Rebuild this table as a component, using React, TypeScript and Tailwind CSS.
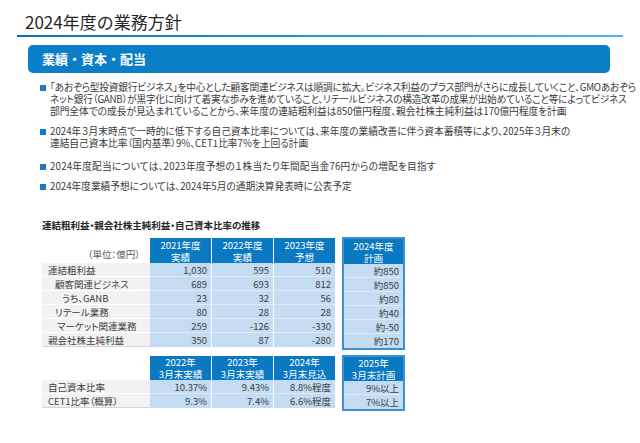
import React from 'react';

const FONT = "font-['Noto_Sans_CJK_JP','Noto_Sans',sans-serif]";

interface Col {
  head: [string, string];
  values: string[];
}

const labels1 = [
  { text: '連結粗利益', indent: 'pl-[6px]' },
  { text: '顧客関連ビジネス', indent: 'pl-[13px]' },
  { text: 'うち、GANB', indent: 'pl-[20px]' },
  { text: 'リテール業務', indent: 'pl-[13px]' },
  { text: 'マーケット関連業務', indent: 'pl-[15px]' },
  { text: '親会社株主純利益', indent: 'pl-[6px]' },
];

const cols1: Col[] = [
  { head: ['2021年度', '実績'], values: ['1,030', '689', '23', '80', '259', '350'] },
  { head: ['2022年度', '実績'], values: ['595', '693', '32', '28', '-126', '87'] },
  { head: ['2023年度', '予想'], values: ['510', '812', '56', '28', '-330', '-280'] },
];
const plan1: Col = { head: ['2024年度', '計画'], values: ['約850', '約850', '約80', '約40', '約-50', '約170'] };

const labels2 = [
  { text: '自己資本比率', indent: 'pl-[6px]' },
  { text: 'CET1比率（概算）', indent: 'pl-[6px]' },
];
const cols2: Col[] = [
  { head: ['2022年', '3月末実績'], values: ['10.37%', '9.3%'] },
  { head: ['2023年', '3月末実績'], values: ['9.43%', '7.4%'] },
  { head: ['2024年', '3月末見込'], values: ['8.8%程度', '6.6%程度'] },
];
const plan2: Col = { head: ['2025年', '3月末計画'], values: ['9%以上', '7%以上'] };

// a line is either plain text or [text, extra classes]
type Line = string | [string, string];

const Bullet: React.FC<{ lines: Line[]; className?: string }> = ({ lines, className }) => (
  <div className={`flex ${className ?? ''}`}>
    <div className="w-[10px] shrink-0 pt-[4px]">
      <div className="w-[6px] h-[6px] bg-[#1f78c4]" />
    </div>
    <div className="whitespace-nowrap">
      {lines.map((l, i) =>
        typeof l === 'string' ? (
          <div key={i}>{l}</div>
        ) : (
          <div key={i} className={l[1]}>
            {l[0]}
          </div>
        )
      )}
    </div>
  </div>
);

const DataCol: React.FC<{ col: Col; headH: string; plan?: boolean }> = ({ col, headH, plan }) => (
  <div
    className={
      plan
        ? 'w-[63px] flex flex-col border-2 border-[#3c90d6] -mt-[1px]'
        : 'w-[61px] mr-[1px] flex flex-col'
    }
  >
    <div
      className={`${headH} bg-[#0b78c2] text-white flex flex-col items-center justify-center leading-[12px]`}
    >
      <div>{col.head[0]}</div>
      <div>{col.head[1]}</div>
    </div>
    {col.values.map((v, i) => (
      <div
        key={i}
        className={`h-[14px] bg-[#c3dcf1] text-right pr-[4px] leading-[14px] ${
          i < col.values.length - 1 ? 'border-b border-[#dce9f6]' : ''
        }`}
      >
        {v}
      </div>
    ))}
  </div>
);

const Table: React.FC<{
  labels: { text: string; indent: string }[];
  cols: Col[];
  plan: Col;
  headH: string;
  unit?: boolean;
}> = ({ labels, cols, plan, headH, unit }) => (
  <div className="flex text-[9.5px] text-[#404040]">
    <div className="w-[108px] flex flex-col">
      <div className={`${headH} flex items-end justify-end pr-[10px] pb-[2px] text-[#595959]`}>
        {unit ? '（単位：億円）' : ''}
      </div>
      {labels.map((l, i) => (
        <div
          key={i}
          className={`h-[14px] leading-[14px] bg-[#f2f2f2] ${l.indent} border-b ${
            i < labels.length - 1 ? 'border-white' : 'border-[#d6d6d6]'
          }`}
        >
          {l.text}
        </div>
      ))}
    </div>
    {cols.map((c, i) => (
      <DataCol key={i} col={c} headH={headH} />
    ))}
    <div className="w-[6px]" />
    <DataCol col={plan} headH={headH} plan />
  </div>
);

export default function App() {
  return (
    <div className={`w-[640px] h-[443px] bg-white overflow-hidden ${FONT} [font-feature-settings:'palt']`}>
      <div className="pt-[11px] pl-[25px] text-[17px] leading-[22px] text-[#262626] [font-feature-settings:normal]">
        2024年度の業務方針
      </div>
      <div className="mt-[2px] ml-[17px] w-[606px] h-[2px] bg-gradient-to-r from-[#0a6fc0] to-[#45b8f5]" />
      <div className="mt-[8px] ml-[28px] w-[582px] h-[28px] rounded-[5px] bg-[#0b7ec8] flex items-center pl-[14px] text-white font-bold text-[13px] [font-feature-settings:normal]">
        業績・資本・配当
      </div>

      <div className="mt-[8px] ml-[40px] text-[9.7px] leading-[12px] text-[#3a3a3a]">
        <Bullet
          lines={[
            [
              '「あおぞら型投資銀行ビジネス」を中心とした顧客関連ビジネスは順調に拡大。ビジネス利益のプラス部門がさらに成長していくこと、GMOあおぞら',
              'tracking-[-0.2px]',
            ],
            [
              'ネット銀行（GANB）が黒字化に向けて着実な歩みを進めていること、リテールビジネスの構造改革の成果が出始めていること等によってビジネス',
              'tracking-[-0.2px]',
            ],
            '部門全体での成長が見込まれていることから、来年度の連結粗利益は850億円程度、親会社株主純利益は170億円程度を計画',
          ]}
        />
        <Bullet
          className="mt-[8px]"
          lines={[
            '2024年３月末時点で一時的に低下する自己資本比率については、来年度の業績改善に伴う資本蓄積等により、2025年３月末の',
            '連結自己資本比率（国内基準）9%、CET1比率7%を上回る計画',
          ]}
        />
        <Bullet
          className="mt-[11px]"
          lines={[['2024年度配当については、2023年度予想の１株当たり年間配当金76円からの増配を目指す', 'tracking-[0.2px]']]}
        />
        <Bullet className="mt-[8px]" lines={['2024年度業績予想については、2024年5月の通期決算発表時に公表予定']} />
      </div>

      <div className="ml-[42px] mt-[27px] text-[9.5px] leading-[12px] font-bold text-[#262626]">
        連結粗利益・親会社株主純利益・自己資本比率の推移
      </div>

      <div className="ml-[42px] mt-[7px]">
        <Table labels={labels1} cols={cols1} plan={plan1} headH="h-[25px]" unit />
        <div className="h-[6px]" />
        <Table labels={labels2} cols={cols2} plan={plan2} headH="h-[24px]" />
      </div>
    </div>
  );
}
